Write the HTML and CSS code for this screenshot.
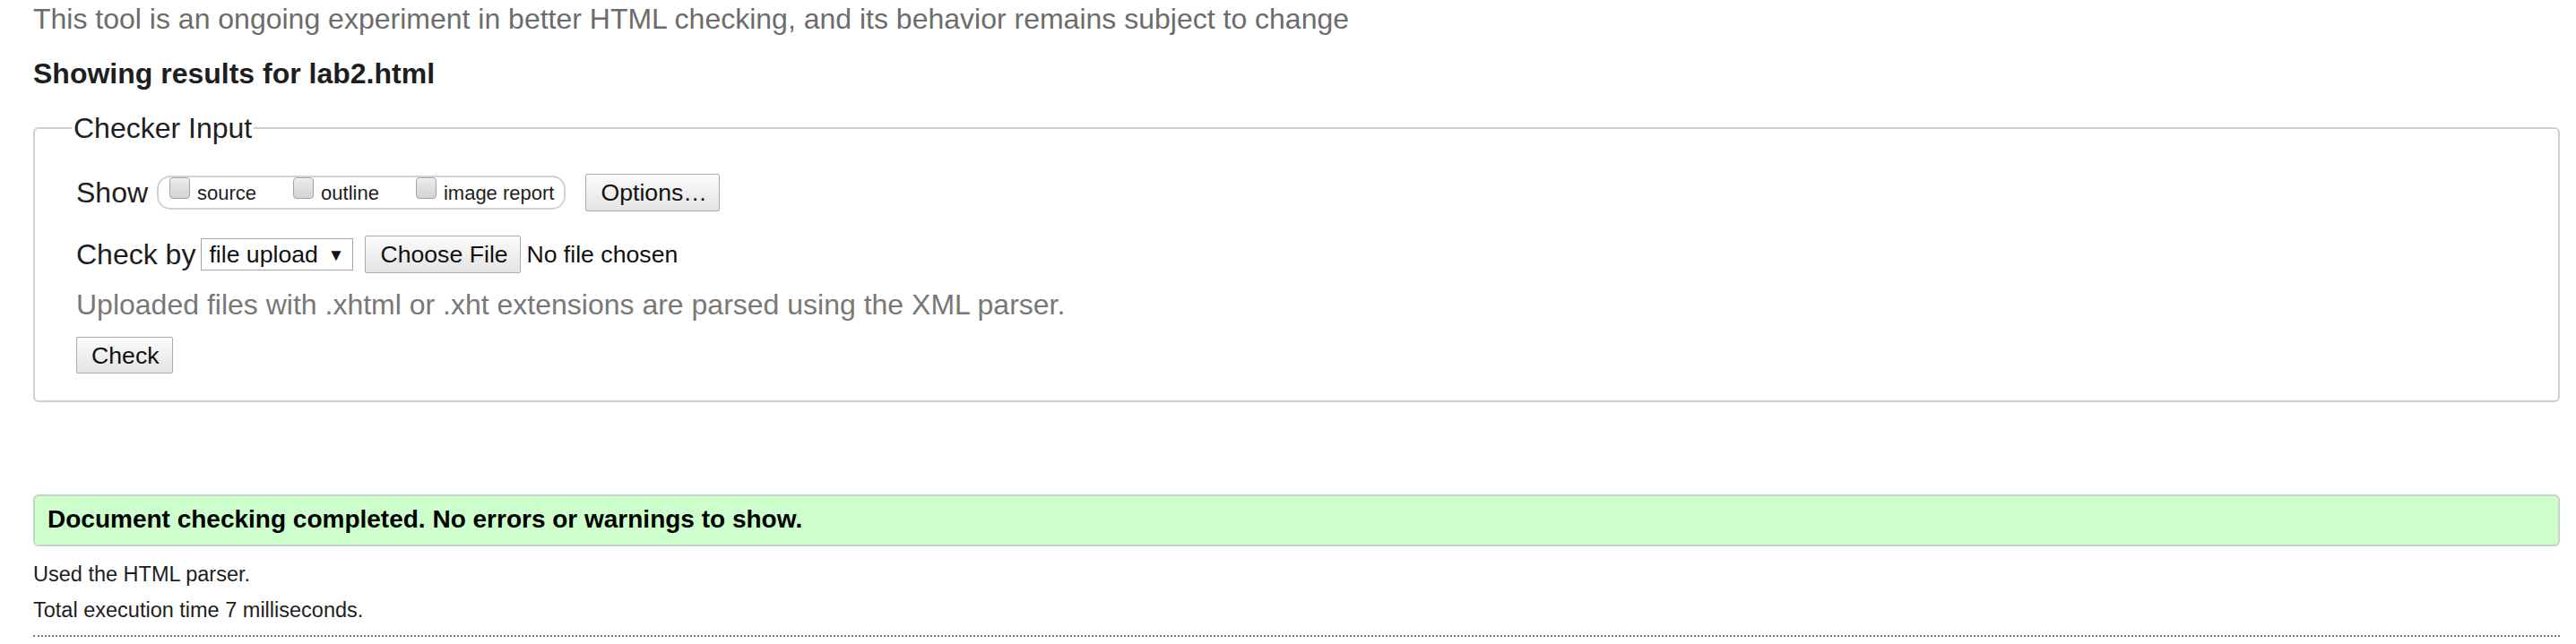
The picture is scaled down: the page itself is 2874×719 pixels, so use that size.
FILE: index.html
```html
<!DOCTYPE html>
<html lang="en">
<head>
<meta charset="utf-8">
<title>Nu Html Checker</title>
<link rel="stylesheet" href="styles.css">
</head>
<body>
<div class="page">
  <p class="intro">This tool is an ongoing experiment in better HTML checking, and its behavior remains subject to change</p>
  <h2 class="results-title">Showing results for lab2.html</h2>

  <form class="checker">
    <fieldset class="checker-input">
      <legend class="checker-legend">Checker Input</legend>

      <div class="row row-show">
        <span class="row-label">Show</span>
        <span class="pill">
          <label class="opt"><input type="checkbox" class="cb"><span class="opt-text">source</span></label>
          <label class="opt"><input type="checkbox" class="cb"><span class="opt-text">outline</span></label>
          <label class="opt opt-last"><input type="checkbox" class="cb"><span class="opt-text">image report</span></label>
        </span>
        <button type="button" class="btn btn-options">Options…</button>
      </div>

      <div class="row row-checkby">
        <span class="row-label">Check by</span>
        <span class="select"><span class="select-text">file upload</span><span class="caret">▼</span></span>
        <button type="button" class="btn btn-file">Choose File</button>
        <span class="file-status">No file chosen</span>
      </div>

      <p class="hint">Uploaded files with .xhtml or .xht extensions are parsed using the XML parser.</p>

      <div class="row row-submit">
        <button type="button" class="btn btn-check">Check</button>
      </div>
    </fieldset>
  </form>

  <div class="success">Document checking completed. No errors or warnings to show.</div>

  <div class="details">
    <p class="detail-line">Used the HTML parser.</p>
    <p class="detail-line detail-second">Total execution time 7 milliseconds.</p>
  </div>
</div>
</body>
</html>
```

FILE: styles.css
```css
html, body {
  margin: 0;
  padding: 0;
  background: #ffffff;
}

body {
  font-family: "Liberation Sans", Arial, sans-serif;
  color: #222222;
}

.page {
  padding: 1px 18px 0 37px;
}

.intro {
  margin: 0;
  font-size: 32px;
  line-height: 40px;
  color: #6c6c6c;
  white-space: nowrap;
}

.results-title {
  margin: 21px 0 0;
  font-size: 32px;
  line-height: 40px;
  font-weight: bold;
  color: #1e1e1e;
}

.checker {
  margin: 21px 0 0;
}

.checker-input {
  margin: 0;
  min-width: 0;
  border: 2px solid #cfcfcf;
  border-radius: 6px;
  padding: 0 16px 30px 46px;
}

.checker-legend {
  margin-left: -5px;
  padding: 0 2px;
  font-size: 32px;
  line-height: 40px;
  color: #1e1e1e;
}

.row {
  display: flex;
  align-items: center;
}

.row-label {
  font-size: 32px;
  line-height: 40px;
  color: #1e1e1e;
  white-space: nowrap;
}

.row-show {
  margin-top: 31px;
  height: 42px;
}

.pill {
  display: flex;
  align-items: flex-start;
  box-sizing: border-box;
  height: 38px;
  margin-left: 10px;
  padding: 0 11px 0 12px;
  border: 2px solid #d2d2d2;
  border-radius: 15px;
}

.opt {
  display: flex;
  align-items: flex-start;
  margin-right: 41px;
}

.opt-last {
  margin-right: 0;
}

.cb {
  -webkit-appearance: none;
  appearance: none;
  box-sizing: border-box;
  width: 23px;
  height: 24px;
  margin: 0 8px 0 0;
  border: 1px solid #a3a3a3;
  border-radius: 4px;
  background: linear-gradient(#ececec, #d3d3d3);
  box-shadow: inset 0 1px 0 #f7f7f7;
}

.opt-text {
  padding-top: 5px;
  font-size: 22px;
  line-height: 26px;
  color: #1e1e1e;
  white-space: nowrap;
}

.btn {
  box-sizing: border-box;
  margin: 0;
  padding: 0 16px;
  font-family: "Liberation Sans", Arial, sans-serif;
  font-size: 26.67px;
  line-height: 30px;
  color: #111111;
  background: linear-gradient(#fbfbfb, #e4e4e4);
  border: 1px solid #ababab;
  border-radius: 2px;
  white-space: nowrap;
}

.btn-options {
  margin-left: 22px;
  width: 150px;
  height: 42px;
}

.row-checkby {
  margin-top: 27px;
  height: 42px;
}

.select {
  box-sizing: border-box;
  display: flex;
  align-items: center;
  justify-content: space-between;
  width: 170px;
  height: 36px;
  margin-left: 6px;
  padding: 0 9px 0 8px;
  border: 1px solid #a6a6a6;
  background: #ffffff;
  font-size: 26.67px;
  color: #111111;
}

.caret {
  font-size: 19px;
  line-height: 1;
}

.btn-file {
  margin-left: 13px;
  width: 174px;
  height: 42px;
}

.file-status {
  margin-left: 6px;
  font-size: 26.67px;
  color: #111111;
  white-space: nowrap;
}

.hint {
  margin: 15px 0 0;
  font-size: 32px;
  line-height: 40px;
  color: #787878;
  white-space: nowrap;
}

.row-submit {
  margin-top: 16px;
}

.btn-check {
  width: 108px;
  height: 41px;
}

.success {
  margin-top: 103px;
  padding: 9px 14px 11px;
  border: 2px solid #c3d5c3;
  border-radius: 6px;
  background: #ccffcc;
  font-size: 28px;
  line-height: 34px;
  font-weight: bold;
  color: #000000;
}

.details {
  margin-top: 17px;
  padding-bottom: 14px;
  border-bottom: 2px dotted #7a7a7a;
}

.detail-line {
  margin: 0;
  font-size: 23.5px;
  line-height: 28px;
  color: #1e1e1e;
}

.detail-second {
  margin-top: 12px;
}
```
